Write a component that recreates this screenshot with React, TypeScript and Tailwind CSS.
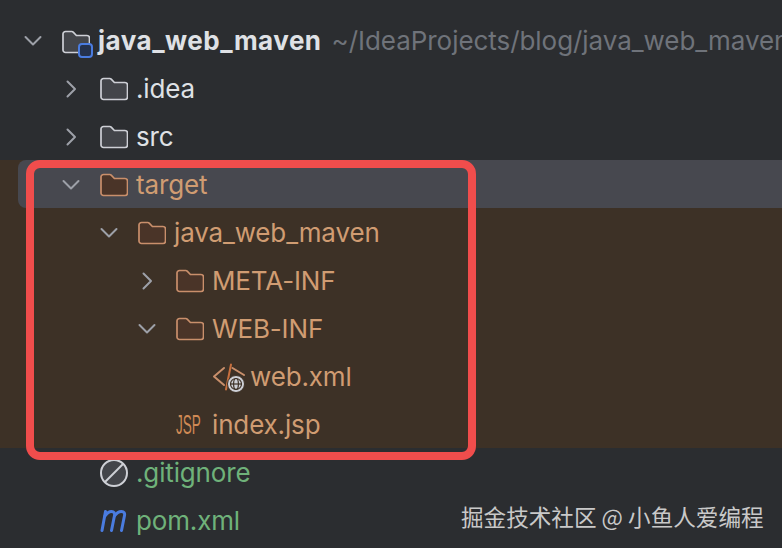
const Chevron = ({ open }: { open?: boolean }) => (
  <svg width="38" height="24" viewBox="0 0 38 24" fill="none" stroke="#9da0a8" strokeWidth="2" strokeLinecap="round" strokeLinejoin="round">
    {open ? <path d="M11.5 8 L19 15.5 L26.5 8" /> : <path d="M15.5 4.5 L23 12 L15.5 19.5" />}
  </svg>
);

const Folder = ({ orange }: { orange?: boolean }) => (
  <svg width="28" height="24" viewBox="0 0 28 24" fill={orange ? '#4a3428' : '#43454a'} stroke={orange ? '#c98f6b' : '#ced0d6'} strokeWidth="1.7" strokeLinejoin="round">
    <path d="M1 4 a2.5 2.5 0 0 1 2.5-2.5 h6.2 a2 2 0 0 1 1.5 .6 l3.2 3.4 h10.6 a2.5 2.5 0 0 1 2.5 2.5 v12 a2.5 2.5 0 0 1-2.5 2.5 h-21.5 a2.5 2.5 0 0 1-2.5-2.5 z" />
  </svg>
);

const RootIcon = () => (
  <div className="relative h-[32px] w-[36px]">
    <Folder />
    <div className="absolute left-[16px] top-[13px] h-[15px] w-[15px] rounded-[4px] border-2 border-[#4a7ce0] bg-[#25324d]" />
  </div>
);

const XmlIcon = () => (
  <svg width="34" height="32" viewBox="0 0 34 32" fill="none" className="-ml-[2px]">
    <path d="M12 7 L2 15.5 L12 24" stroke="#c98f6b" strokeWidth="2" strokeLinecap="round" strokeLinejoin="round" />
    <path d="M19 3.5 L14 28.5" stroke="#c8703f" strokeWidth="2" strokeLinecap="round" />
    <path d="M20.5 7 L32 14" stroke="#c98f6b" strokeWidth="2" strokeLinecap="round" />
    <circle cx="24" cy="23" r="8.5" fill="#ced0d6" stroke="#3d3126" strokeWidth="1" />
    <g stroke="#3d3126" strokeWidth="1.2" fill="none">
      <circle cx="24" cy="23" r="5.5" />
      <ellipse cx="24" cy="23" rx="2.4" ry="5.5" />
      <path d="M18.5 23 H29.5" />
    </g>
  </svg>
);

const JspIcon = () => (
  <div className="w-[28px] origin-left scale-x-[.5] whitespace-nowrap font-['Liberation_Sans',sans-serif] text-[27px] leading-none text-[#d08a55]">
    JSP
  </div>
);

const IgnoreIcon = () => (
  <svg width="28" height="30" viewBox="0 0 28 30" fill="#43454a" stroke="#ced0d6" strokeWidth="2">
    <circle cx="14" cy="15" r="13" />
    <path d="M5 24 L23 6" />
  </svg>
);

const MavenIcon = () => (
  <svg width="28" height="22" viewBox="0 0 28 22" fill="none" stroke="#4a7ce0" strokeWidth="3" strokeLinecap="round">
    <path d="M2 20.5 L5.5 1.5" />
    <path d="M5 6 C7 3 9.5 1.5 11.5 1.5 C14 1.5 15 3 14.5 5.5 L11.5 20.5" />
    <path d="M14.5 6 C16.5 3 19 1.5 21.5 1.5 C24 1.5 25 3 24.5 5.5 L21.5 20.5" />
  </svg>
);

const rows = [
  { pad: 'pl-[52px]', chevron: 'closed', icon: <Folder />, label: '.idea', color: 'text-[#dfe1e5]' },
  { pad: 'pl-[52px]', chevron: 'closed', icon: <Folder />, label: 'src', color: 'text-[#dfe1e5]' },
];

const targetRows = [
  { pad: 'pl-[90px]', chevron: 'open', icon: <Folder orange />, label: 'java_web_maven' },
  { pad: 'pl-[128px]', chevron: 'closed', icon: <Folder orange />, label: 'META-INF' },
  { pad: 'pl-[128px]', chevron: 'open', icon: <Folder orange />, label: 'WEB-INF' },
  { pad: 'pl-[166px]', chevron: 'none', icon: <XmlIcon />, label: 'web.xml' },
  { pad: 'pl-[128px]', chevron: 'none', icon: <JspIcon />, label: 'index.jsp' },
];

const fileRows = [
  { pad: 'pl-[52px]', chevron: 'none', icon: <IgnoreIcon />, label: '.gitignore', color: 'text-[#6fb27a]' },
  { pad: 'pl-[52px]', chevron: 'none', icon: <MavenIcon />, label: 'pom.xml', color: 'text-[#6fb27a]' },
];

const Row = ({ pad, chevron, icon, label, color }: { pad: string; chevron: string; icon: React.ReactNode; label: string; color: string }) => (
  <div className={`flex h-[48px] items-center pt-[2px] ${pad}`}>
    <div className="flex w-[38px] shrink-0 justify-center">
      {chevron !== 'none' && <Chevron open={chevron === 'open'} />}
    </div>
    <div className="flex w-[46px] shrink-0 pl-[10px]">{icon}</div>
    <span className={`whitespace-nowrap tracking-[-0.15px] ${color}`}>{label}</span>
  </div>
);

export default function App() {
  return (
    <div className="relative h-[548px] w-[782px] overflow-hidden bg-[#2b2d30] pt-[16px] font-['Inter',sans-serif] text-[26px] leading-[32px]">
      {/* project root */}
      <div className="flex h-[48px] items-center pl-[14px] pt-[2px]">
        <div className="flex w-[38px] shrink-0 justify-center"><Chevron open /></div>
        <div className="flex w-[46px] shrink-0 pl-[10px] pt-[9px]"><RootIcon /></div>
        <span className="whitespace-nowrap font-bold tracking-[0.5px] text-[#dfe1e5]">java_web_maven</span>
        <span className="ml-[10px] whitespace-nowrap tracking-[-0.05px] text-[#6f737a]">~/IdeaProjects/blog/java_web_maven</span>
      </div>

      {rows.map((r) => <Row key={r.label} {...r} />)}

      {/* excluded folder */}
      <div className="bg-[#3d3126]">
        <div className="ml-[18px] flex h-[48px] items-center rounded-l-[8px] bg-[#47484f] pl-[34px] pt-[2px]">
          <div className="flex w-[38px] shrink-0 justify-center"><Chevron open /></div>
          <div className="flex w-[46px] shrink-0 pl-[10px]"><Folder orange /></div>
          <span className="whitespace-nowrap tracking-[-0.15px] text-[#d09c72]">target</span>
        </div>
        {targetRows.map((r) => <Row key={r.label} {...r} color="text-[#d09c72]" />)}
      </div>

      {fileRows.map((r) => <Row key={r.label} {...r} />)}

      {/* annotation box */}
      <div className="absolute left-[26px] top-[160px] h-[300px] w-[450px] rounded-[14px] border-[8px] border-[#f04d4c]" />

      {/* watermark */}
      <div className="absolute left-[461px] top-[502px] whitespace-nowrap font-['Noto_Sans_CJK_SC',sans-serif] text-[22.6px] leading-[30px] text-[#c9c9c9]">
        掘金技术社区 @ 小鱼人爱编程
      </div>
    </div>
  );
}
